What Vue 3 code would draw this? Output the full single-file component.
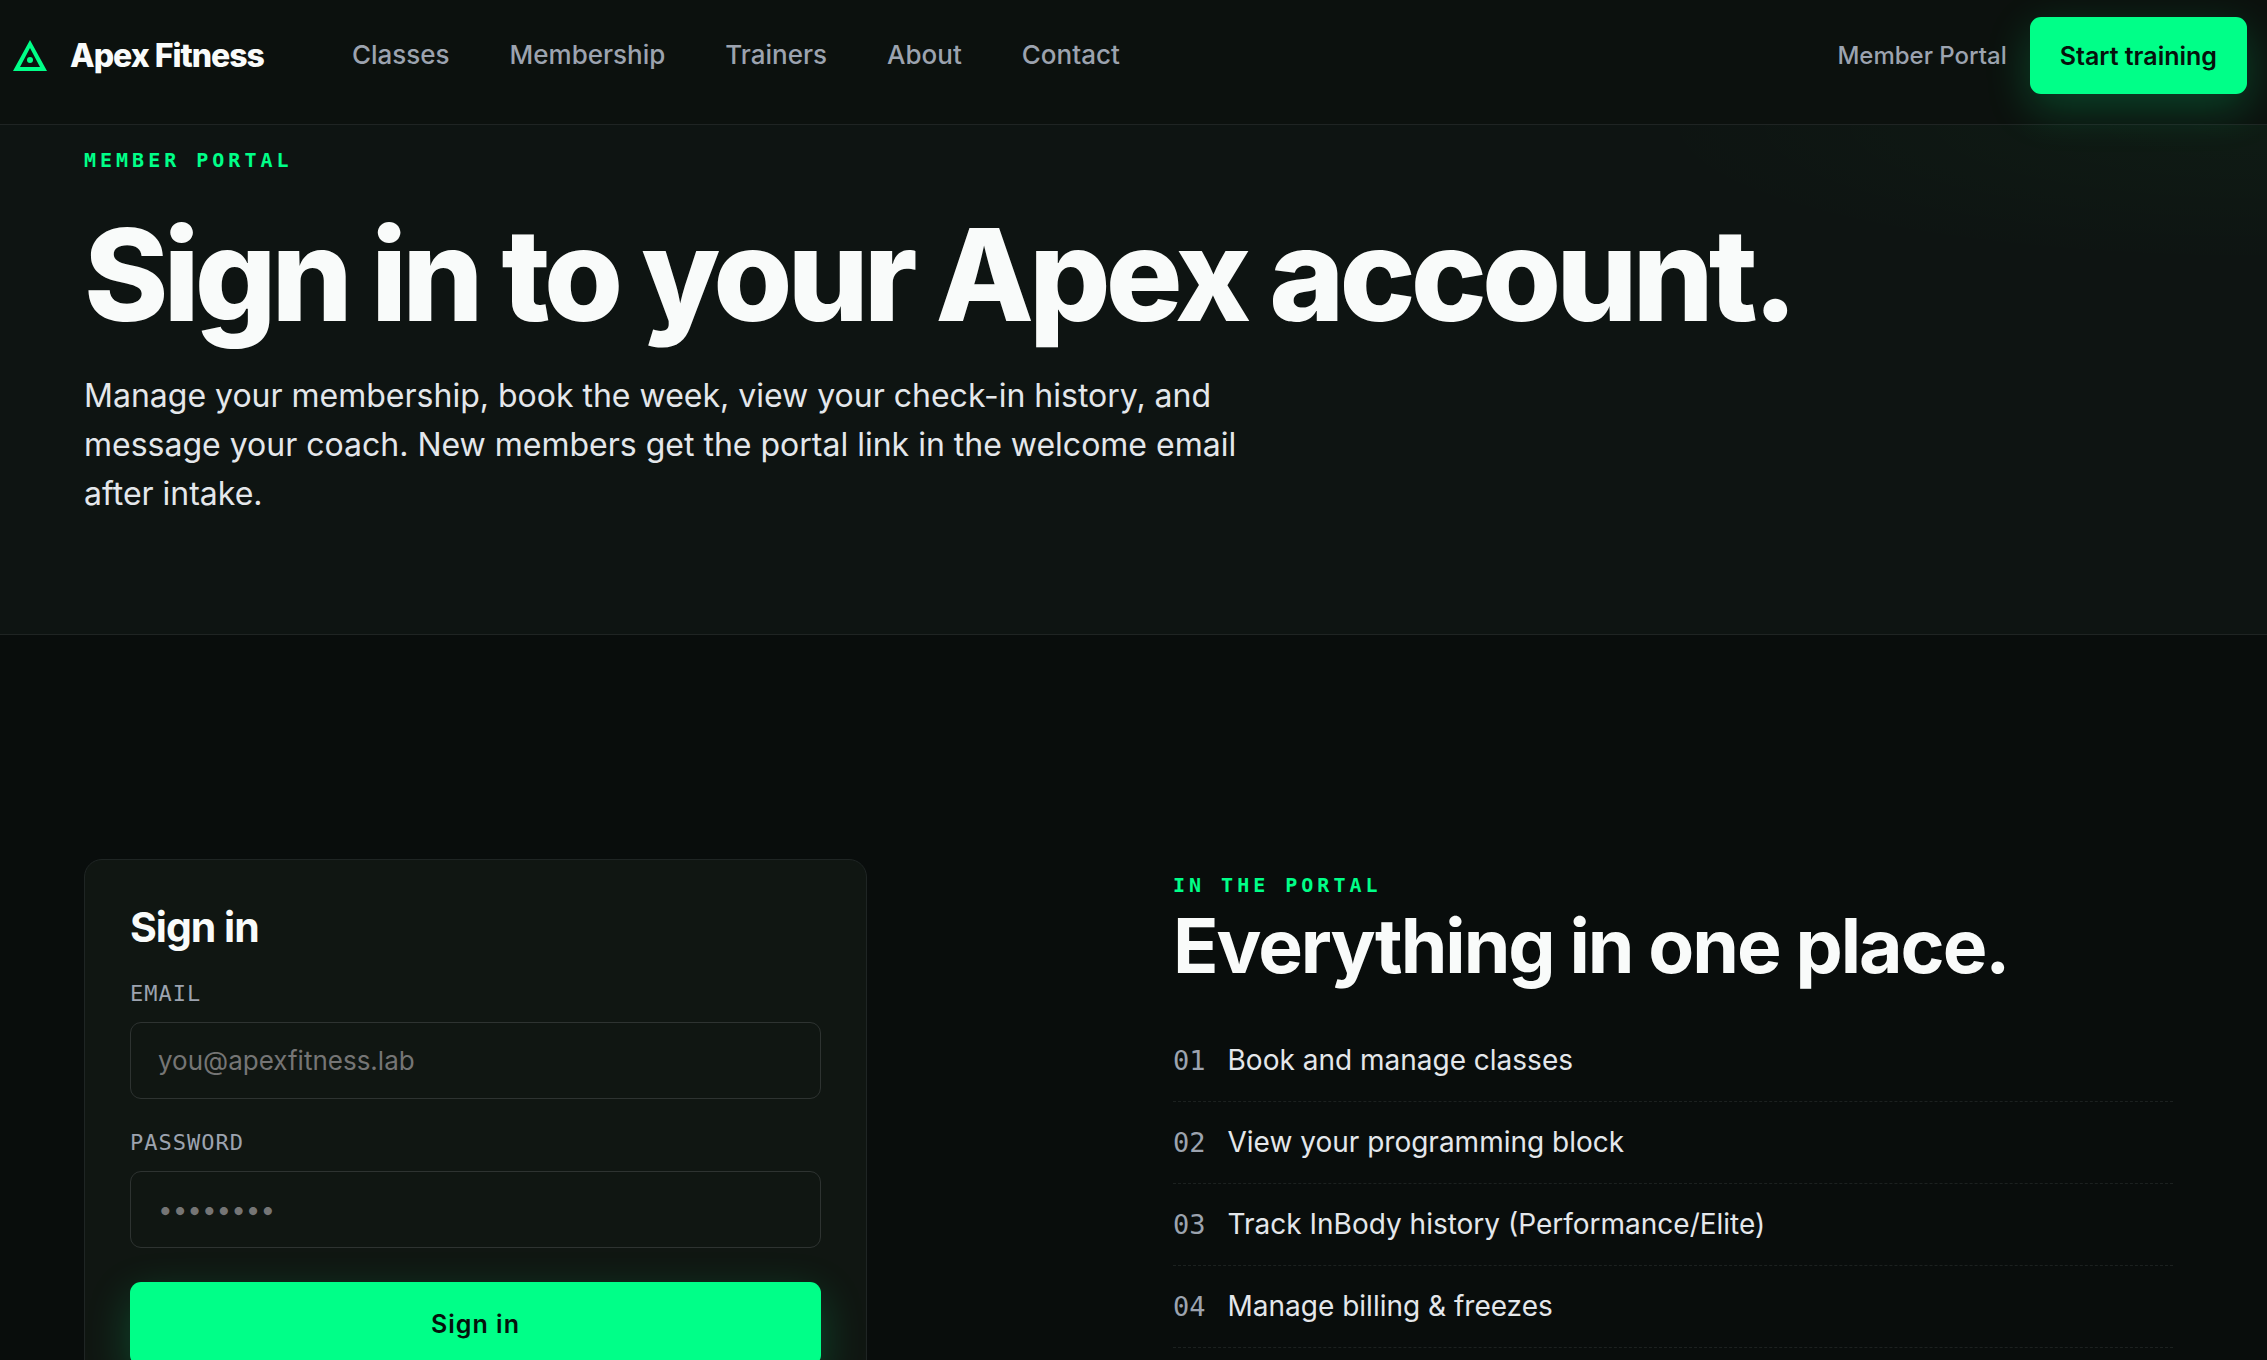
<script setup>
import { ref } from 'vue'

const email = ref('')
const password = ref('')

const links = ['Classes', 'Membership', 'Trainers', 'About', 'Contact']
const features = [
  'Book and manage classes',
  'View your programming block',
  'Track InBody history (Performance/Elite)',
  'Manage billing & freezes',
]
</script>

<template>
  <div class="page">
    <header class="site-header">
      <a class="brand" href="#">
        <svg class="brand-mark" viewBox="0 0 34 31" aria-hidden="true">
          <path d="M17 0 L34 31 H0 Z M17 8 L7 27 H27 Z" fill="#00ff88" fill-rule="evenodd" />
          <circle cx="17" cy="20" r="3" fill="#00ff88" />
        </svg>
        <span>Apex Fitness</span>
      </a>
      <nav class="nav" aria-label="Main">
        <a v-for="link in links" :key="link" href="#">{{ link }}</a>
      </nav>
      <div class="actions">
        <a class="portal-link" href="#">Member Portal</a>
        <a class="btn btn-small" href="#">Start training</a>
      </div>
    </header>

    <main>
      <section class="hero">
        <p class="eyebrow">Member Portal</p>
        <h1>Sign in to your Apex account.</h1>
        <p class="lead">
          Manage your membership, book the week, view your check-in history, and message your
          coach. New members get the portal link in the welcome email after intake.
        </p>
      </section>

      <section class="content">
        <form class="card" @submit.prevent>
          <h3>Sign in</h3>
          <div class="fields">
            <div class="field">
              <label for="email">Email</label>
              <input id="email" v-model="email" type="email" placeholder="you@apexfitness.lab" />
            </div>
            <div class="field">
              <label for="password">Password</label>
              <input id="password" v-model="password" type="password" placeholder="••••••••" />
            </div>
          </div>
          <button class="btn" type="submit">Sign in</button>
        </form>

        <div class="portal">
          <p class="eyebrow">In the portal</p>
          <h2>Everything in one place.</h2>
          <ol class="features">
            <li v-for="(feature, i) in features" :key="feature">
              <span class="num">0{{ i + 1 }}</span>
              <span>{{ feature }}</span>
            </li>
          </ol>
        </div>
      </section>
    </main>
  </div>
</template>

<style>
body {
  margin: 0;
  background: #090d0c;
}
</style>

<style scoped>
* {
  box-sizing: border-box;
}

.page {
  min-height: 100vh;
  background: #090d0c;
  color: #e4e7eb;
  font-family: Inter, "Liberation Sans", sans-serif;
  font-size: 28px;
}

a {
  color: inherit;
  text-decoration: none;
}

h1,
h2,
h3,
p,
ol {
  margin: 0;
  padding: 0;
}

h1,
h2,
h3 {
  color: #f9fbfa;
}

.site-header {
  position: relative;
  display: flex;
  align-items: flex-start;
  padding: 17px 20px 30px 13px;
  border-bottom: 1px solid #1f2423;
  background: #0c110e;
}

.brand {
  display: flex;
  align-items: center;
  gap: 23px;
  height: 77px;
  color: #f9fbfa;
  font-size: 32px;
  font-weight: 800;
  letter-spacing: -1px;
}

.brand-mark {
  width: 34px;
  height: 31px;
}

.nav {
  display: flex;
  align-items: center;
  gap: 60px;
  height: 75px;
  margin-left: 88px;
  color: #9ca3af;
  font-size: 26px;
  font-weight: 500;
}

.actions {
  display: flex;
  align-items: center;
  gap: 23px;
  margin-left: auto;
}

.portal-link {
  color: #9ca3af;
  font-size: 24px;
  font-weight: 500;
}

.btn {
  display: flex;
  align-items: center;
  justify-content: center;
  width: 100%;
  height: 84px;
  border: 0;
  border-radius: 11px;
  background: #00ff88;
  box-shadow: 0 14px 44px rgba(0, 255, 136, 0.22);
  color: #06120c;
  font-family: inherit;
  font-size: 25px;
  font-weight: 600;
  letter-spacing: 1px;
}

.btn-small {
  width: auto;
  height: 77px;
  padding: 0 30px;
  letter-spacing: 0;
}

.hero {
  padding: 21px 84px 116px;
  border-bottom: 1px solid #1f2423;
  background:
    radial-gradient(ellipse 900px 200px at 100% 0, rgba(40, 255, 90, 0.03), transparent 70%),
    #0e1412;
}

.eyebrow {
  color: #00ff88;
  font-family: "DejaVu Sans Mono", monospace;
  font-size: 20px;
  font-weight: 700;
  letter-spacing: 4px;
  line-height: 28px;
  text-transform: uppercase;
}

h1 {
  margin-top: 34px;
  font-size: 128px;
  font-weight: 800;
  letter-spacing: -5px;
  line-height: 134px;
}

.lead {
  max-width: 1170px;
  margin-top: 29px;
  font-size: 32px;
  line-height: 49px;
}

.content {
  display: grid;
  grid-template-columns: 783fr 1000fr;
  align-items: start;
  gap: 306px;
  padding: 224px 94px 224px 84px;
}

.card {
  display: flex;
  flex-direction: column;
  padding: 45px;
  border: 1px solid #1f2524;
  border-radius: 18px;
  background: #101612;
}

h3 {
  font-size: 41px;
  font-weight: 700;
  letter-spacing: -1px;
  line-height: 44px;
}

.fields {
  display: flex;
  flex-direction: column;
  gap: 30px;
  margin: 31px 0 34px;
}

.field {
  display: flex;
  flex-direction: column;
  gap: 14px;
}

label {
  color: #9ca3af;
  font-family: "DejaVu Sans Mono", monospace;
  font-size: 22px;
  letter-spacing: 1px;
  line-height: 28px;
  text-transform: uppercase;
}

input {
  width: 100%;
  height: 77px;
  padding: 0 27px;
  border: 1px solid #2e3331;
  border-radius: 11px;
  background: #101612;
  color: #e4e7eb;
  font-family: inherit;
  font-size: 26px;
}

input::placeholder {
  color: #757575;
  opacity: 1;
}

.portal {
  padding-top: 12px;
}

h2 {
  margin-top: 6px;
  font-size: 75px;
  font-weight: 700;
  letter-spacing: -2px;
  line-height: 82px;
}

.features {
  margin-top: 33px;
  list-style: none;
}

.features li {
  display: flex;
  align-items: baseline;
  gap: 22px;
  padding: 19px 0;
  border-bottom: 1px dashed #1c2120;
  line-height: 43px;
}

.num {
  color: #9ca3af;
  font-family: "DejaVu Sans Mono", monospace;
  font-size: 27px;
}
</style>
